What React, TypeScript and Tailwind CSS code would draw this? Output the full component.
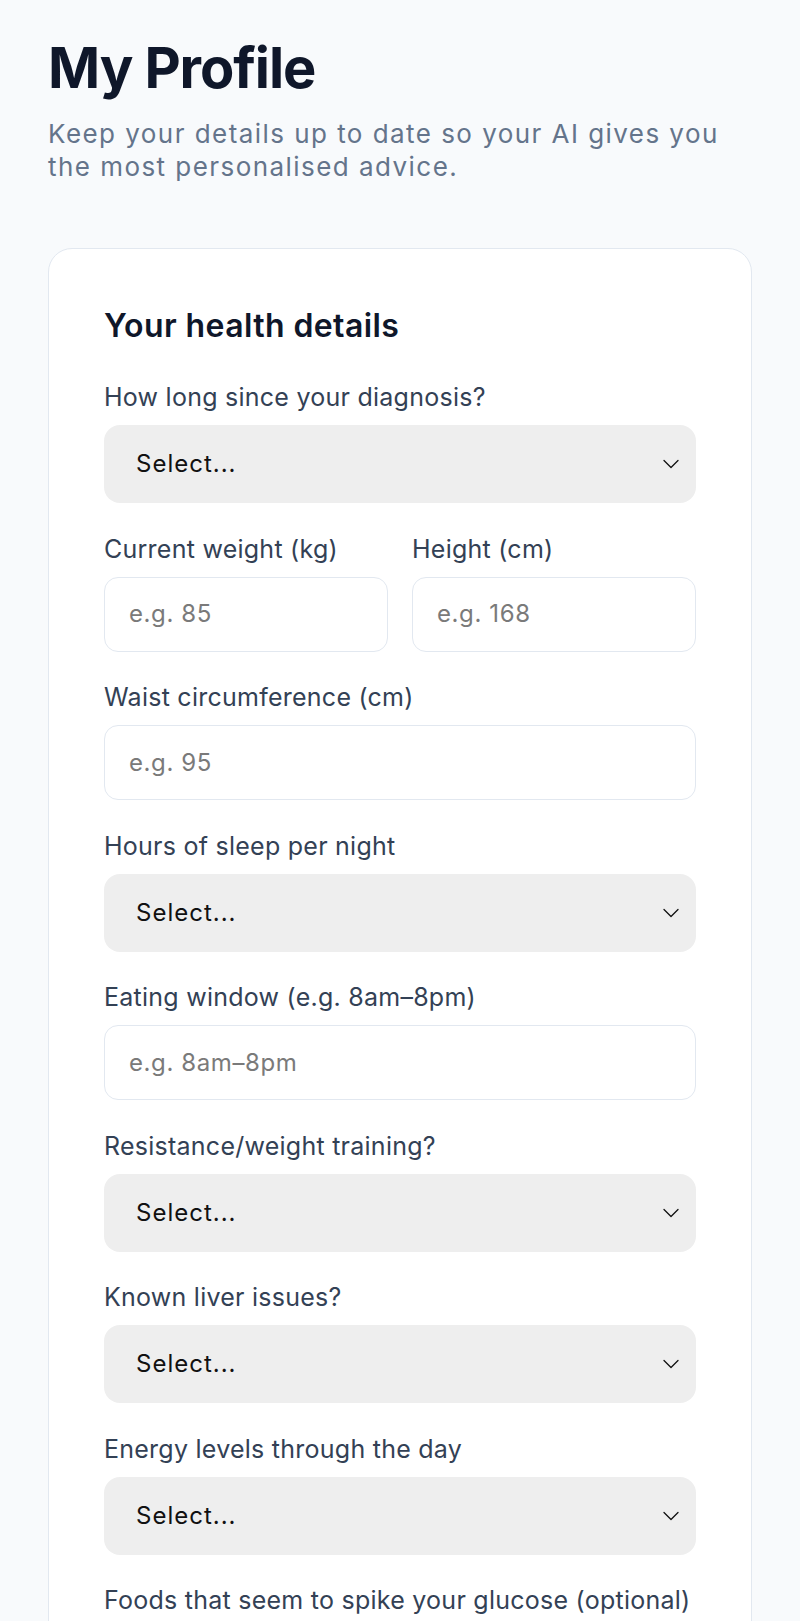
const ChevronDown = () => (
  <svg width="16" height="10" viewBox="0 0 16 10" fill="none" className="shrink-0">
    <path d="M1 1.5L8 8.5L15 1.5" stroke="#111111" strokeWidth="1.3" strokeLinecap="round" strokeLinejoin="round" />
  </svg>
);

const Label = ({ children }: { children: React.ReactNode }) => (
  <label className="block text-[25px] leading-[36px] tracking-[0.25px] text-[#334155] mb-[10px]">{children}</label>
);

const SelectBox = () => (
  <div className="h-[78px] rounded-[16px] bg-[#eeeeee] flex items-center justify-between pl-[32px] pr-[17px]">
    <span className="text-[24px] tracking-[1px] text-[#111111]">Select...</span>
    <ChevronDown />
  </div>
);

const TextBox = ({ placeholder }: { placeholder: string }) => (
  <div className="h-[75px] rounded-[14px] bg-white border border-[#e2e8f0] flex items-center pl-[24px]">
    <span className="text-[24px] tracking-[0.6px] text-[#7a7a7a]">{placeholder}</span>
  </div>
);

const App = () => {
  return (
    <div className="min-h-screen bg-[#f8fafc] font-['Inter',sans-serif] px-[48px] pt-[35px] pb-[40px]">
      <h1 className="text-[56px] leading-[67px] font-bold text-[#0f172a] tracking-[-1.1px]">My Profile</h1>
      <p className="mt-[15px] text-[26px] leading-[33px] tracking-[1.45px] text-[#64748b] max-w-[690px]">
        Keep your details up to date so your AI gives you the most personalised advice.
      </p>

      <div className="mt-[65px] bg-white border border-[#e2e8f0] rounded-[24px] px-[55px] pt-[57px] pb-[56px]">
        <h2 className="text-[32px] leading-[40px] font-semibold tracking-[0.4px] text-[#0f172a]">Your health details</h2>

        <div className="mt-[33px] flex flex-col gap-[27.5px]">
          <div>
            <Label>How long since your diagnosis?</Label>
            <SelectBox />
          </div>

          <div className="grid grid-cols-2 gap-[24px]">
            <div>
              <Label>Current weight (kg)</Label>
              <TextBox placeholder="e.g. 85" />
            </div>
            <div>
              <Label>Height (cm)</Label>
              <TextBox placeholder="e.g. 168" />
            </div>
          </div>

          <div>
            <Label>Waist circumference (cm)</Label>
            <TextBox placeholder="e.g. 95" />
          </div>

          <div>
            <Label>Hours of sleep per night</Label>
            <SelectBox />
          </div>

          <div>
            <Label>Eating window (e.g. 8am–8pm)</Label>
            <TextBox placeholder="e.g. 8am–8pm" />
          </div>

          <div>
            <Label>Resistance/weight training?</Label>
            <SelectBox />
          </div>

          <div>
            <Label>Known liver issues?</Label>
            <SelectBox />
          </div>

          <div>
            <Label>Energy levels through the day</Label>
            <SelectBox />
          </div>

          <div>
            <Label>Foods that seem to spike your glucose (optional)</Label>
            <TextBox placeholder="e.g. white rice, bread" />
          </div>
        </div>
      </div>
    </div>
  );
};

export default App;
